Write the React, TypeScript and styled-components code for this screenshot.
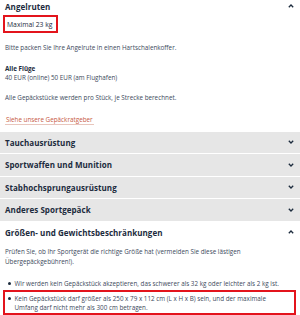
import styled, { createGlobalStyle } from "styled-components";

const GlobalStyle = createGlobalStyle`
  html, body {
    margin: 0;
    padding: 0;
    background: #ffffff;
  }
  body {
    font-family: "Open Sans", "Liberation Sans", sans-serif;
    color: #3d4a5c;
    -webkit-font-smoothing: antialiased;
  }
`;

const Page = styled.div`
  width: 300px;
  height: 315px;
  overflow: hidden;
  display: flex;
  flex-direction: column;
`;

const Header = styled.div<{ $grey?: boolean; $h?: number }>`
  display: flex;
  align-items: center;
  justify-content: space-between;
  height: ${(p) => p.$h ?? 21.5}px;
  padding: 0 6px 0 5px;
  background: ${(p) => (p.$grey ? "#e6e6e6" : "#ffffff")};
  border-bottom: 1px solid #ffffff;
  flex-shrink: 0;
`;

const Title = styled.div`
  font-size: 8px;
  font-weight: 700;
  color: #1c2b3d;
  letter-spacing: 0.05px;
`;

const Panel = styled.div`
  padding: 0 5px;
  display: flex;
  flex-direction: column;
`;

const Text = styled.p<{ $bold?: boolean; $lh?: number }>`
  margin: 0;
  font-size: 6.3px;
  line-height: ${(p) => p.$lh ?? 9}px;
  font-weight: ${(p) => (p.$bold ? 700 : 400)};
  color: ${(p) => (p.$bold ? "#1c2b3d" : "#3d4a5c")};
`;

const Marked = styled.div`
  align-self: flex-start;
  border: 2px solid #e3141c;
  margin: 2px 0 0 -2px;
  padding: 3px 3px 2px 2px;
  font-size: 6.8px;
  line-height: 9px;
  color: #1c2b3d;
`;

const Link = styled.a`
  align-self: flex-start;
  font-size: 6.3px;
  line-height: 9px;
  color: #c75a45;
  text-decoration: none;
  border-bottom: 1px solid #e8c6bd;
  padding: 0 1px;
`;

const Bullets = styled.ul`
  list-style: none;
  margin: 0;
  padding: 0;
  display: flex;
  flex-direction: column;
`;

const Bullet = styled.li<{ $marked?: boolean }>`
  position: relative;
  font-size: 6.3px;
  line-height: 9px;
  padding: ${(p) => (p.$marked ? "1.5px 5.5px 1.5px 9.5px" : "0 5.5px 0 9.5px")};
  margin-left: -2px;
  margin-right: -1px;
  border: 2px solid ${(p) => (p.$marked ? "#e3141c" : "transparent")};
  color: #3d4a5c;

  &::before {
    content: "";
    position: absolute;
    left: 3px;
    top: ${(p) => (p.$marked ? "4.5px" : "3px")};
    width: 3px;
    height: 3px;
    border-radius: 50%;
    background: #1c2b3d;
  }
`;

const Gap = styled.div<{ $h: number }>`
  height: ${(p) => p.$h}px;
  flex-shrink: 0;
`;

function Chevron({ up }: { up?: boolean }) {
  return (
    <svg width="6" height="4" viewBox="0 0 6 4">
      <path
        d={up ? "M0.8 3.2 L3 1 L5.2 3.2" : "M0.8 0.8 L3 3 L5.2 0.8"}
        fill="none"
        stroke="#1c2b3d"
        strokeWidth="1.3"
      />
    </svg>
  );
}

const sections = [
  "Tauchausrüstung",
  "Sportwaffen und Munition",
  "Stabhochsprungausrüstung",
  "Anderes Sportgepäck",
];

function App() {
  return (
    <Page>
      <GlobalStyle />
      <Header $h={12}>
        <Title>Angelruten</Title>
        <Chevron up />
      </Header>
      <Panel>
        <Marked>Maximal 23 kg</Marked>
        <Gap $h={9.5} />
        <Text>Bitte packen Sie Ihre Angelrute in einen Hartschalenkoffer.</Text>
        <Gap $h={12} />
        <Text $bold>Alle Flüge</Text>
        <Text>40 EUR (online) 50 EUR (am Flughafen)</Text>
        <Gap $h={11} />
        <Text>Alle Gepäckstücke werden pro Stück, je Strecke berechnet.</Text>
        <Gap $h={13} />
        <Link href="#">Siehe unsere Gepäckratgeber</Link>
        <Gap $h={7} />
      </Panel>
      {sections.map((s) => (
        <Header $grey key={s}>
          <Title>{s}</Title>
          <Chevron />
        </Header>
      ))}
      <Header>
        <Title>Größen- und Gewichtsbeschränkungen</Title>
        <Chevron up />
      </Header>
      <Panel>
        <Gap $h={3} />
        <Text $lh={9.5}>
          Prüfen Sie, ob Ihr Sportgerät die richtige Größe hat (vermeiden Sie diese lästigen
          Übergepäckgebühren!).
        </Text>
        <Gap $h={11} />
        <Bullets>
          <Bullet>
            Wir werden kein Gepäckstück akzeptieren, das schwerer als 32 kg oder leichter als 2 kg
            ist.
          </Bullet>
          <Bullet $marked>
            Kein Gepäckstück darf größer als 250 x 79 x 112 cm (L x H x B) sein, und der maximale
            Umfang darf nicht mehr als 300 cm betragen.
          </Bullet>
        </Bullets>
      </Panel>
    </Page>
  );
}

export default App;
